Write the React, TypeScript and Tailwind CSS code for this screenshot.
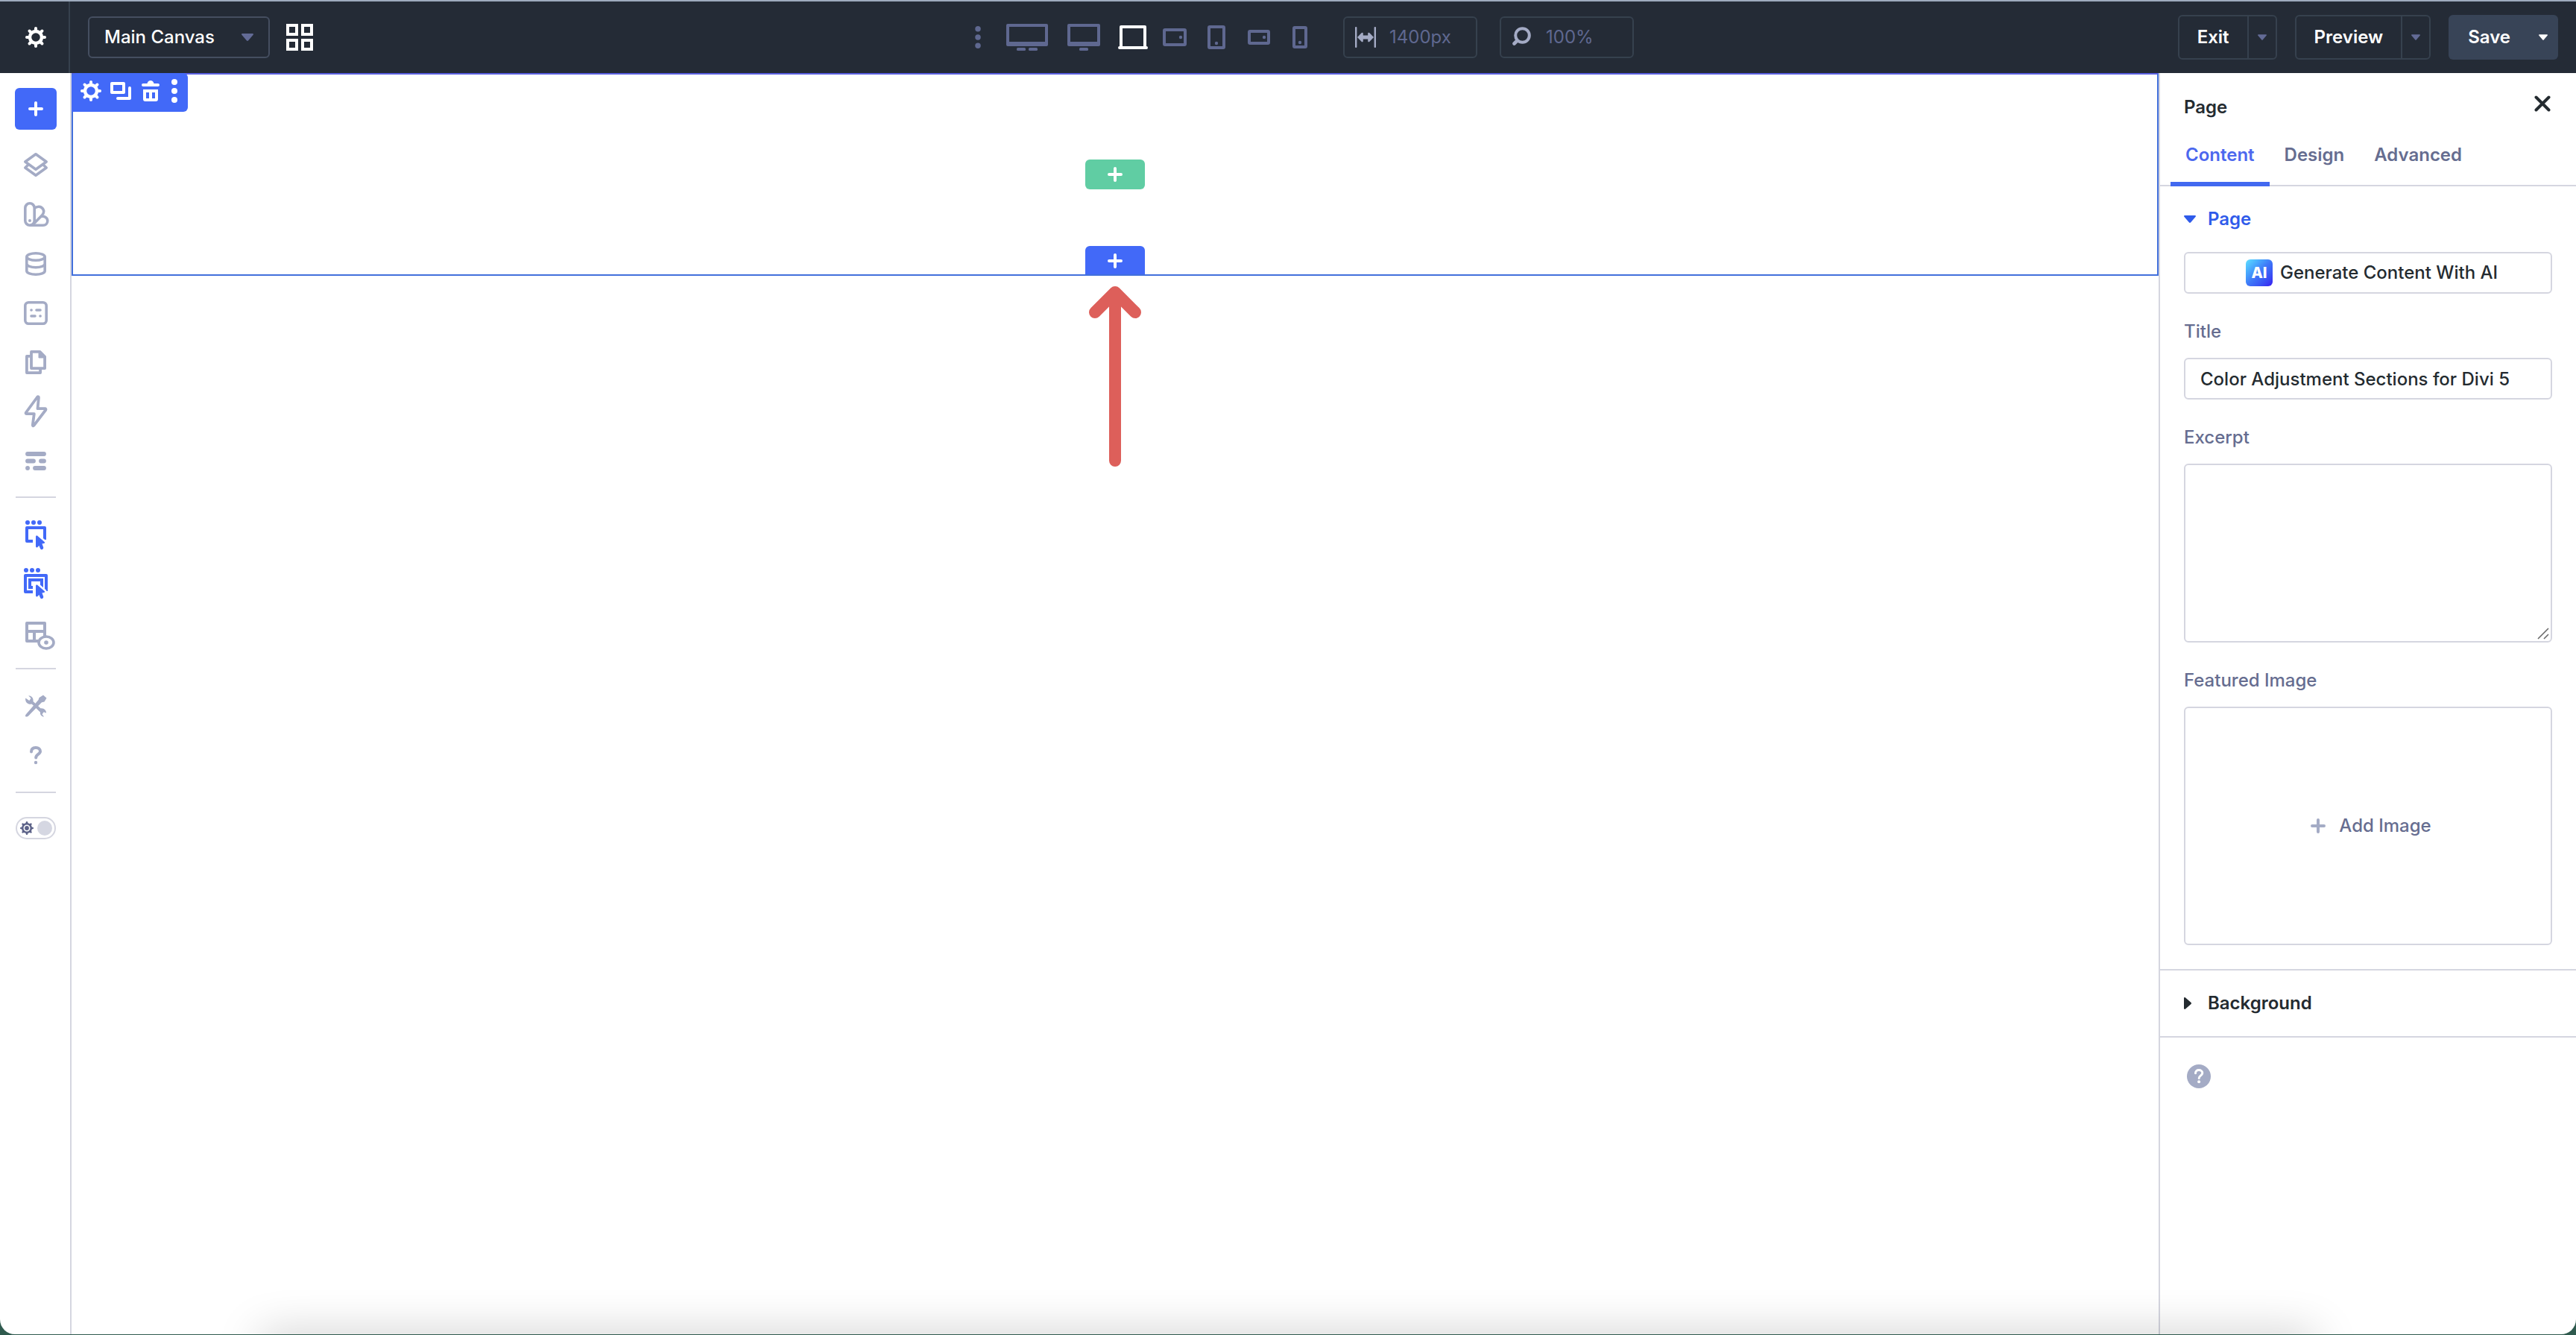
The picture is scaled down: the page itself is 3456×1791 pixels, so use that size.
import { useState } from "react";
import type { ReactNode } from "react";
import clsx from "clsx";

interface IconProps {
  className?: string;
}

const TEETH = [0, 45, 90, 135, 180, 225, 270, 315];

function GearIcon({ className }: IconProps) {
  return (
    <svg viewBox="0 0 28 28" className={className} fill="none" stroke="currentColor" aria-hidden="true">
      <circle cx="14" cy="14" r="8" strokeWidth="4.4" />
      {TEETH.map((deg) => (
        <path key={deg} d="M14 4.5V2" strokeWidth="4" strokeLinecap="round" transform={`rotate(${deg} 14 14)`} />
      ))}
    </svg>
  );
}

function PlusIcon({ className }: IconProps) {
  return (
    <svg viewBox="0 0 20 20" className={className} stroke="currentColor" strokeWidth="4" strokeLinecap="round" aria-hidden="true">
      <path d="M10 2v16M2 10h16" />
    </svg>
  );
}

function CaretIcon({ className }: IconProps) {
  return (
    <svg viewBox="0 0 16 10" className={className} fill="currentColor" aria-hidden="true">
      <path d="M1.2 0h13.6c1 0 1.5 1 .9 1.8L9.2 9.3c-.7.9-1.7.9-2.4 0L.3 1.8C-.3 1 .2 0 1.2 0Z" />
    </svg>
  );
}

function DotsIcon({ className }: IconProps) {
  return (
    <svg viewBox="0 0 8 32" className={className} fill="currentColor" aria-hidden="true">
      <circle cx="4" cy="4" r="4" />
      <circle cx="4" cy="16" r="4" />
      <circle cx="4" cy="28" r="4" />
    </svg>
  );
}

function GridIcon() {
  return (
    <svg viewBox="0 0 36 36" className="size-9" fill="none" stroke="currentColor" strokeWidth="4" aria-hidden="true">
      <path d="M2 2h12v12H2zM22 2h12v12H22zM2 22h12v12H2zM22 22h12v12H22z" />
    </svg>
  );
}

interface Device {
  name: string;
  size: string;
  gap: string;
  viewBox: string;
  art: ReactNode;
}

const DEVICES: Device[] = [
  {
    name: "Ultra wide",
    size: "w-14 h-9",
    gap: "ml-[34px]",
    viewBox: "0 0 56 36",
    art: (
      <>
        <path fillRule="evenodd" d="M2 0h52a2 2 0 0 1 2 2v26a2 2 0 0 1-2 2H2a2 2 0 0 1-2-2V2a2 2 0 0 1 2-2Zm2 4v20h48V4Z" />
        <rect x="14" y="32" width="12" height="4" rx="1.5" />
        <rect x="30" y="32" width="12" height="4" rx="1.5" />
      </>
    ),
  },
  {
    name: "Wide",
    size: "w-11 h-9",
    gap: "ml-[26px]",
    viewBox: "0 0 44 36",
    art: (
      <>
        <path fillRule="evenodd" d="M2 0h40a2 2 0 0 1 2 2v26a2 2 0 0 1-2 2H2a2 2 0 0 1-2-2V2a2 2 0 0 1 2-2Zm2 4v20h36V4Z" />
        <rect x="16" y="32" width="12" height="4" rx="1.5" />
      </>
    ),
  },
  {
    name: "Desktop",
    size: "w-10 h-8",
    gap: "ml-6",
    viewBox: "0 0 40 32",
    art: (
      <path fillRule="evenodd" d="M4 0h32a2 2 0 0 1 2 2v26a2 2 0 0 1 0 4H2a2 2 0 0 1 0-4V2a2 2 0 0 1 2-2Zm2 4v24h28V4Z" />
    ),
  },
  {
    name: "Tablet wide",
    size: "w-8 h-6",
    gap: "ml-5",
    viewBox: "0 0 32 24",
    art: (
      <>
        <rect x="2" y="2" width="28" height="20" rx="1" fill="none" stroke="currentColor" strokeWidth="4" />
        <circle cx="24" cy="12" r="2.2" />
      </>
    ),
  },
  {
    name: "Tablet",
    size: "w-6 h-8",
    gap: "ml-7",
    viewBox: "0 0 24 32",
    art: (
      <>
        <rect x="2" y="2" width="20" height="28" rx="1" fill="none" stroke="currentColor" strokeWidth="4" />
        <circle cx="12" cy="24" r="2.2" />
      </>
    ),
  },
  {
    name: "Phone wide",
    size: "w-[30px] h-5",
    gap: "ml-[30px]",
    viewBox: "0 0 30 20",
    art: (
      <>
        <rect x="2" y="2" width="26" height="16" rx="1" fill="none" stroke="currentColor" strokeWidth="4" />
        <circle cx="22" cy="10" r="2.2" />
      </>
    ),
  },
  {
    name: "Phone",
    size: "w-5 h-[30px]",
    gap: "ml-[30px]",
    viewBox: "0 0 20 30",
    art: (
      <>
        <rect x="2" y="2" width="16" height="26" rx="1" fill="none" stroke="currentColor" strokeWidth="4" />
        <circle cx="10" cy="22" r="2.2" />
      </>
    ),
  },
];

interface Tool {
  name: string;
  art: ReactNode;
}

// All sidebar art is drawn on a 44px square centred on the rail.
const PANEL_TOOLS: Tool[] = [
  {
    name: "Layers",
    art: (
      <g strokeWidth="3.6" strokeLinejoin="round">
        <path d="M22 6.8 36.2 17 22 27.2 7.8 17Z" />
        <path d="M11.5 21.5 7.8 25 22 35.2 36.2 25l-3.7-3.5" strokeLinecap="round" />
      </g>
    ),
  },
  {
    name: "Design variables",
    art: (
      <g strokeWidth="3.6" strokeLinejoin="round">
        <rect x="7.8" y="6.8" width="12.4" height="29.4" rx="6.2" />
        <path d="M20.2 13.500c4-3.600 9-2.700 11.300.6 2 3 1.200 6-1 8.600L18.500 35" />
        <path d="M29 24.500c4.700-1 8.800 1.500 8.800 5.700 0 3.800-2.800 6-6 6H14" />
        <circle cx="14" cy="30" r="2" fill="currentColor" stroke="none" />
      </g>
    ),
  },
  {
    name: "Data",
    art: (
      <g strokeWidth="3.6">
        <ellipse cx="22" cy="12.5" rx="12.2" ry="4.8" />
        <path d="M9.8 12.500v19c0 2.700 5.500 4.700 12.200 4.700s12.200-2 12.200-4.700v-19" />
        <path d="M9.8 22c0 2.700 5.500 4.700 12.200 4.700S34.200 24.700 34.200 22" />
      </g>
    ),
  },
  {
    name: "Presets",
    art: (
      <g strokeWidth="3.6" strokeLinecap="round">
        <rect x="7.8" y="7.8" width="28.4" height="28.4" rx="4.5" />
        <path d="M16 18h.1M23 18h5M16 26h5M28 26h.1" />
      </g>
    ),
  },
  {
    name: "Pages",
    art: (
      <g strokeWidth="3.8" strokeLinejoin="round">
        <path d="M16 7.900h11.500l6.600 6.600v15.600H16Z" />
        <path d="M26 8v8h8Z" fill="currentColor" strokeWidth="1" />
        <path d="M14.500 13.900H9.900v22.200h18.200v-5" />
      </g>
    ),
  },
  {
    name: "Interactions",
    art: (
      <path
        strokeWidth="3.8"
        strokeLinejoin="round"
        d="M24.200 2.500 8.800 23.500c-.6 1 0 1.700 1 1.700h10l-2 15c-.1 1.300 1 1.500 1.600.6L35.300 20c.6-1 0-1.800-1-1.800H24.500l1.400-15c0-1-1-1.500-1.700-.7Z"
      />
    ),
  },
  {
    name: "Wireframe",
    art: (
      <g strokeWidth="5.8" strokeLinecap="round">
        <path d="M11 13h22M11 22.500h8M29 22.500h4M11 32h.1M21 32h12" />
      </g>
    ),
  },
];

const CURSOR =
  "M22 24c0-1.400 1.300-2 2.400-1.100L33.600 31c.9.8.5 1.800-.7 2l-2.500.4 1.700 4.700c.4 1.300-.1 2.400-1.200 2.900-1.300.5-2.500 0-3-1.300L26.400 36l-2 2c-1 1-2.400.5-2.400-.9Z";

function Cursor() {
  return (
    <>
      <path d={CURSOR} stroke="#fff" strokeWidth="5" strokeLinejoin="round" />
      <path d={CURSOR} fill="currentColor" stroke="none" />
    </>
  );
}

const VIEW_TOOLS: (Tool & { active: boolean })[] = [
  {
    name: "Click mode",
    active: true,
    art: (
      <>
        <g fill="currentColor" stroke="none">
          <circle cx="11" cy="5" r="3" />
          <circle cx="19" cy="5" r="3" />
          <circle cx="27" cy="5" r="3" />
        </g>
        <path strokeWidth="4" strokeLinejoin="round" d="M18 30h-8V12h24v16" />
        <Cursor />
      </>
    ),
  },
  {
    name: "Grid mode",
    active: true,
    art: (
      <>
        <g fill="currentColor" stroke="none">
          <circle cx="9" cy="3" r="3" />
          <circle cx="17" cy="3" r="3" />
          <circle cx="25" cy="3" r="3" />
        </g>
        <path strokeWidth="4" strokeLinejoin="round" d="M18 32H8V10h28v21" />
        <path strokeWidth="4" d="M18 26h-4V16h16v10" />
        <Cursor />
      </>
    ),
  },
  {
    name: "Parent controls",
    active: false,
    art: (
      <>
        <path strokeWidth="4" strokeLinejoin="round" d="M26 32H10V8h24v18M8 19h26M20 20v12" />
        <ellipse cx="36" cy="34" rx="10" ry="8" strokeWidth="3.6" fill="#fff" />
        <circle cx="36" cy="34" r="2.8" fill="currentColor" stroke="none" />
      </>
    ),
  },
];

const HELP_TOOLS: Tool[] = [
  {
    name: "Tools",
    art: (
      <g stroke="none" fill="currentColor">
        <path d="M8.300 11.500c-.8 3.500 1 7 4.500 8 1.500.4 2.700.2 3.800 0L28 30.500c-.5 3.500 2 6 5 6l-2.500-3.300 2.200-3 3.300 1.300c.3-3.500-3-7-7.500-6.200L18.500 16c.8-4-2-8-6.300-7.800l3.300 3.600-2.200 3.200Z" />
        <path d="m32 7.500 4.500 4-3 5-3.500.8L14.500 33c-2.300 3-4 3.500-5.500 3.500-1.300 0-1.300-1.500-.3-3L25.500 14l1-3Z" />
      </g>
    ),
  },
  {
    name: "Help",
    art: (
      <>
        <path strokeWidth="4" strokeLinecap="round" d="M16 17.500c0-3.800 2.600-5.500 6-5.500s6 2 6 5c0 4-5.800 4-5.800 8.500" />
        <circle cx="22" cy="32" r="2.2" fill="currentColor" stroke="none" />
      </>
    ),
  },
];

function RailButton({ tool, active = false }: { tool: Tool; active?: boolean }) {
  return (
    <button
      type="button"
      aria-label={tool.name}
      className={clsx("flex h-[66px] w-full items-center justify-center", active ? "text-[#4269f8]" : "text-[#a4abc5]")}
    >
      <svg viewBox="0 0 44 44" className="size-11 overflow-visible" fill="none" stroke="currentColor" aria-hidden="true">
        {tool.art}
      </svg>
    </button>
  );
}

function Rail() {
  const [dark, setDark] = useState(false);
  return (
    <nav aria-label="Builder tools" className="flex w-24 shrink-0 flex-col items-center border-r-2 border-[#d5d6e0] pt-5 pl-0.5">
      <button type="button" aria-label="Add element" className="mb-[15px] flex size-14 items-center justify-center rounded-md bg-[#4269f8] text-white">
        <PlusIcon className="size-5" />
      </button>
      {PANEL_TOOLS.map((t) => (
        <RailButton key={t.name} tool={t} />
      ))}
      <div className="mt-[15px] mb-[17px] h-0.5 w-[54px] bg-[#d5d6e0]" />
      {VIEW_TOOLS.map((t) => (
        <RailButton key={t.name} tool={t} active={t.active} />
      ))}
      <div className="mt-[13px] mb-4 h-0.5 w-[54px] bg-[#d5d6e0]" />
      {HELP_TOOLS.map((t) => (
        <RailButton key={t.name} tool={t} />
      ))}
      <div className="mt-4 mb-8 h-0.5 w-[54px] bg-[#d5d6e0]" />
      <label className="relative flex h-[30px] w-[54px] items-center justify-between rounded-full border-2 border-[#d5d6e0] pr-[3px] pl-1">
        <input
          type="checkbox"
          role="switch"
          aria-label="Dark mode"
          checked={dark}
          onChange={(e) => setDark(e.target.checked)}
          className="absolute inset-0 appearance-none"
        />
        <svg viewBox="0 0 28 28" className="size-[18px] text-[#5c6288]" fill="none" stroke="currentColor" aria-hidden="true">
          <circle cx="14" cy="14" r="9" strokeWidth="4" />
          <circle cx="14" cy="14" r="4.5" fill="currentColor" stroke="none" />
          {TEETH.map((deg) => (
            <path key={deg} d="M14 4V2" strokeWidth="4" strokeLinecap="round" transform={`rotate(${deg} 14 14)`} />
          ))}
        </svg>
        <span className="size-5 rounded-full bg-[#d5d7e2]" />
      </label>
    </nav>
  );
}

function SplitButton({ label }: { label: string }) {
  return (
    <div className="flex h-[60px] rounded-md border-2 border-[#36414e]">
      <button type="button" className="px-6 font-semibold text-white">
        {label}
      </button>
      <button
        type="button"
        aria-label={`${label} options`}
        className="flex w-[38px] items-center justify-center border-l-2 border-[#36414e] text-[#636b96]"
      >
        <CaretIcon className="h-2 w-3" />
      </button>
    </div>
  );
}

function TopBar() {
  return (
    <header className="flex h-[98px] shrink-0 items-stretch border-t-2 border-[#9eabbd] bg-[#242b36] text-2xl">
      <div className="flex flex-1">
        <button type="button" aria-label="Settings" className="flex w-[94px] items-center justify-center border-r-2 border-[#36414e] pl-1 text-white">
          <GearIcon className="size-7" />
        </button>
        <div className="flex items-center pl-6">
          <div className="relative">
            <select
              aria-label="Canvas"
              className="h-14 w-[244px] appearance-none rounded-md border-2 border-[#454e60] bg-transparent pl-5 font-medium text-white"
            >
              <option>Main Canvas</option>
            </select>
            <CaretIcon className="pointer-events-none absolute top-[23px] right-[22px] h-2.5 w-4 text-[#636b96]" />
          </div>
          <button type="button" aria-label="All canvases" className="ml-[22px] text-white">
            <GridIcon />
          </button>
        </div>
      </div>

      <div className="flex items-center pl-[68px] text-[#5f6890]">
        <button type="button" aria-label="More breakpoints">
          <DotsIcon className="h-[30px] w-2" />
        </button>
        {DEVICES.map((d) => (
          <button key={d.name} type="button" aria-label={d.name} className={clsx(d.gap, d.name === "Desktop" && "text-white")}>
            <svg viewBox={d.viewBox} className={d.size} fill="currentColor" aria-hidden="true">
              {d.art}
            </svg>
          </button>
        ))}
        <label className="ml-12 flex h-14 w-[180px] items-center rounded-md border-2 border-[#36414e] pl-3.5">
          <svg viewBox="0 0 28 28" className="size-7 shrink-0 text-[#a4abc5]" fill="currentColor" aria-hidden="true">
            <rect x="0" y="0" width="2.4" height="28" rx="1" />
            <rect x="25.6" y="0" width="2.4" height="28" rx="1" />
            <path d="m3 14 5.500-5.700c1-1 2.300-.5 2.300.8v2.500h6.400V9.100c0-1.300 1.300-1.800 2.300-.8L25 14l-5.500 5.700c-1 1-2.300.5-2.300-.8v-2.500h-6.400v2.500c0 1.300-1.300 1.800-2.300.8Z" />
          </svg>
          <input aria-label="Canvas width" defaultValue="1400px" className="ml-[18px] w-24 bg-transparent" />
        </label>
        <label className="ml-[30px] flex h-14 w-[180px] items-center rounded-md border-2 border-[#36414e] pl-3.5">
          <svg viewBox="0 0 28 28" className="size-7 shrink-0 text-[#a4abc5]" fill="none" stroke="currentColor" strokeWidth="4" strokeLinecap="round" aria-hidden="true">
            <circle cx="14.5" cy="11.5" r="9.3" />
            <path d="m7.500 18.500-4 4" strokeWidth="4.6" />
          </svg>
          <input aria-label="Zoom" defaultValue="100%" className="ml-[18px] w-24 bg-transparent" />
        </label>
      </div>

      <div className="flex flex-1 items-center justify-end gap-6 pr-6">
        <SplitButton label="Exit" />
        <SplitButton label="Preview" />
        <div className="flex h-[60px] rounded-md bg-[#384457] text-white">
          <button type="button" className="pl-[26px] font-semibold">
            Save
          </button>
          <button type="button" aria-label="Save options" className="flex w-16 items-center justify-end pr-3.5">
            <CaretIcon className="h-2 w-3" />
          </button>
        </div>
      </div>
    </header>
  );
}

function Canvas() {
  return (
    <main className="min-w-0 flex-1">
      <section className="relative flex h-[272px] flex-col items-center justify-end border-2 border-[#4270dc] border-t-[#5a60e0]">
        <div className="absolute -top-0.5 -left-0.5 flex h-[52px] w-[156px] items-center rounded-md rounded-bl-none bg-[#4269f8] pb-1 pl-3 text-white">
          <button type="button" aria-label="Section settings">
            <GearIcon className="size-7" />
          </button>
          <button type="button" aria-label="Duplicate section" className="ml-3">
            <svg viewBox="0 0 28 28" className="size-7" fill="none" stroke="currentColor" strokeWidth="4" aria-hidden="true">
              <path d="M2 4h16v12H2z" strokeLinejoin="round" />
              <path d="M26 10v14H10" strokeLinecap="round" strokeLinejoin="round" />
            </svg>
          </button>
          <button type="button" aria-label="Delete section" className="ml-3">
            <svg viewBox="0 0 28 28" className="size-7" fill="currentColor" aria-hidden="true">
              <path d="M4 4h5.500C10 1.500 12 0 14 0s4 1.500 4.500 4H24a2 2 0 0 1 0 4H4a2 2 0 0 1 0-4Z" />
              <path fillRule="evenodd" d="M4 12h20v13a3 3 0 0 1-3 3H7a3 3 0 0 1-3-3Zm4 4v8h4v-8Zm8 0v8h4v-8Z" />
            </svg>
          </button>
          <button type="button" aria-label="More section options" className="ml-3.5">
            <DotsIcon className="h-8 w-2" />
          </button>
        </div>
        <button type="button" aria-label="Add row" className="mb-[76px] flex h-10 w-20 items-center justify-center rounded-md bg-[#60cda3] text-white">
          <PlusIcon className="size-5" />
        </button>
        <button type="button" aria-label="Add section" className="flex h-[38px] w-20 items-center justify-center rounded-t-md bg-[#4269f8] pt-0.5 text-white">
          <PlusIcon className="size-5" />
        </button>
      </section>
      <svg viewBox="0 0 72 244" className="mx-auto mt-[13px] h-[244px] w-[72px]" fill="none" stroke="#dd5f5a" strokeWidth="16" strokeLinecap="round" strokeLinejoin="round" aria-hidden="true">
        <path d="M36 9v226M9 36 36 9l27 27" />
      </svg>
    </main>
  );
}

const TABS = ["Content", "Design", "Advanced"];

function SettingsPanel() {
  const [tab, setTab] = useState("Content");
  const [title, setTitle] = useState("Color Adjustment Sections for Divi 5");
  return (
    <aside className="w-[560px] shrink-0 border-l-2 border-[#d5d6e0] text-2xl text-[#242b30]">
      <div className="flex h-[84px] items-start justify-between pt-[30px] pr-8 pl-8">
        <h2 className="font-semibold">Page</h2>
        <button type="button" aria-label="Close">
          <svg viewBox="0 0 24 22" className="h-[22px] w-6" stroke="currentColor" strokeWidth="4" strokeLinecap="round" aria-hidden="true">
            <path d="m2.500 2.500 17 17M19.500 2.500l-17 17" />
          </svg>
        </button>
      </div>
      <div role="tablist" className="flex h-[68px] border-b-2 border-[#d5d6e0] pl-3.5">
        {TABS.map((t) => (
          <button
            key={t}
            type="button"
            role="tab"
            aria-selected={tab === t}
            onClick={() => setTab(t)}
            className={clsx(
              "-mb-0.5 border-b-6 px-5 pt-2.5 pb-5 font-semibold",
              tab === t ? "border-[#4269f0] text-[#4c68ee]" : "border-transparent text-[#666d90]"
            )}
          >
            {t}
          </button>
        ))}
      </div>

      <div className="flex flex-col border-b-2 border-[#d5d6e0] px-8 pb-8">
        <button type="button" aria-expanded="true" className="flex h-[88px] items-center gap-4 font-semibold text-[#2f5bea]">
          <CaretIcon className="h-2.5 w-4" />
          Page
        </button>
        <button type="button" className="flex h-14 items-center justify-center gap-2.5 rounded-md border-2 border-[#d5d6e0] pl-2.5 font-medium">
          <span className="flex size-9 items-center justify-center rounded-md bg-linear-to-br from-[#5fe0ff] via-[#3f78f8] to-[#3a0ff0] text-xl font-extrabold text-white">
            AI
          </span>
          Generate Content With AI
        </button>
        <label htmlFor="title" className="mt-[35px] mb-[19px] font-medium text-[#666d90]">
          Title
        </label>
        <input
          id="title"
          value={title}
          onChange={(e) => setTitle(e.target.value)}
          className="h-14 rounded-md border-2 border-[#d5d6e0] px-5 font-medium"
        />
        <label htmlFor="excerpt" className="mt-[35px] mb-[19px] font-medium text-[#666d90]">
          Excerpt
        </label>
        <div className="relative flex">
          <textarea id="excerpt" className="h-60 w-full resize-none rounded-md border-2 border-[#d5d6e0] p-4" />
          <svg viewBox="0 0 16 16" className="absolute right-1 bottom-1 size-4" stroke="#6b6b6b" strokeWidth="1.6" aria-hidden="true">
            <path d="M1 15 15 1M9 15l6-6" />
          </svg>
        </div>
        <p className="mt-[35px] mb-[19px] font-medium text-[#666d90]">Featured Image</p>
        <button type="button" className="flex h-80 items-center justify-center gap-[18px] rounded-md border-2 border-[#d5d6e0] pl-2 font-medium text-[#666d90]">
          <PlusIcon className="size-5 text-[#a4abc5]" />
          Add Image
        </button>
      </div>

      <button type="button" aria-expanded="false" className="flex h-[90px] w-full items-center gap-4 border-b-2 border-[#d5d6e0] px-8 font-semibold">
        <span className="flex w-4">
          <svg viewBox="0 0 10 16" className="h-4 w-2.5" fill="currentColor" aria-hidden="true">
            <path d="M0 1.200v13.600c0 1 1 1.500 1.800.9l7.500-6.500c.9-.7.9-1.700 0-2.400L1.800.3C1-.3 0 .2 0 1.200Z" />
          </svg>
        </span>
        Background
      </button>
      <button type="button" aria-label="Help" className="mt-9 ml-9 block text-[#a4abc5]">
        <svg viewBox="0 0 32 32" className="size-8" fill="none" aria-hidden="true">
          <circle cx="16" cy="16" r="16" fill="currentColor" />
          <path d="M11.500 11.800C11.500 8.800 13.500 7.500 16 7.500s4.800 1.500 4.800 4c0 3.200-4.600 3.500-4.600 7" stroke="#fff" strokeWidth="3" strokeLinecap="round" />
          <circle cx="16.1" cy="23.3" r="2" fill="#fff" />
        </svg>
      </button>
    </aside>
  );
}

export default function App() {
  return (
    <div className="flex min-h-screen flex-col bg-[#2f5a4e] pb-px font-['Inter','Liberation_Sans',sans-serif]">
      <div className="relative flex flex-1 flex-col overflow-hidden rounded-b-[20px] bg-white">
        <TopBar />
        <div className="flex flex-1">
          <Rail />
          <Canvas />
          <SettingsPanel />
        </div>
        <div className="pointer-events-none absolute inset-x-[350px] top-full h-10 shadow-[0_0_60px_rgba(0,0,0,0.22)]" />
      </div>
    </div>
  );
}
